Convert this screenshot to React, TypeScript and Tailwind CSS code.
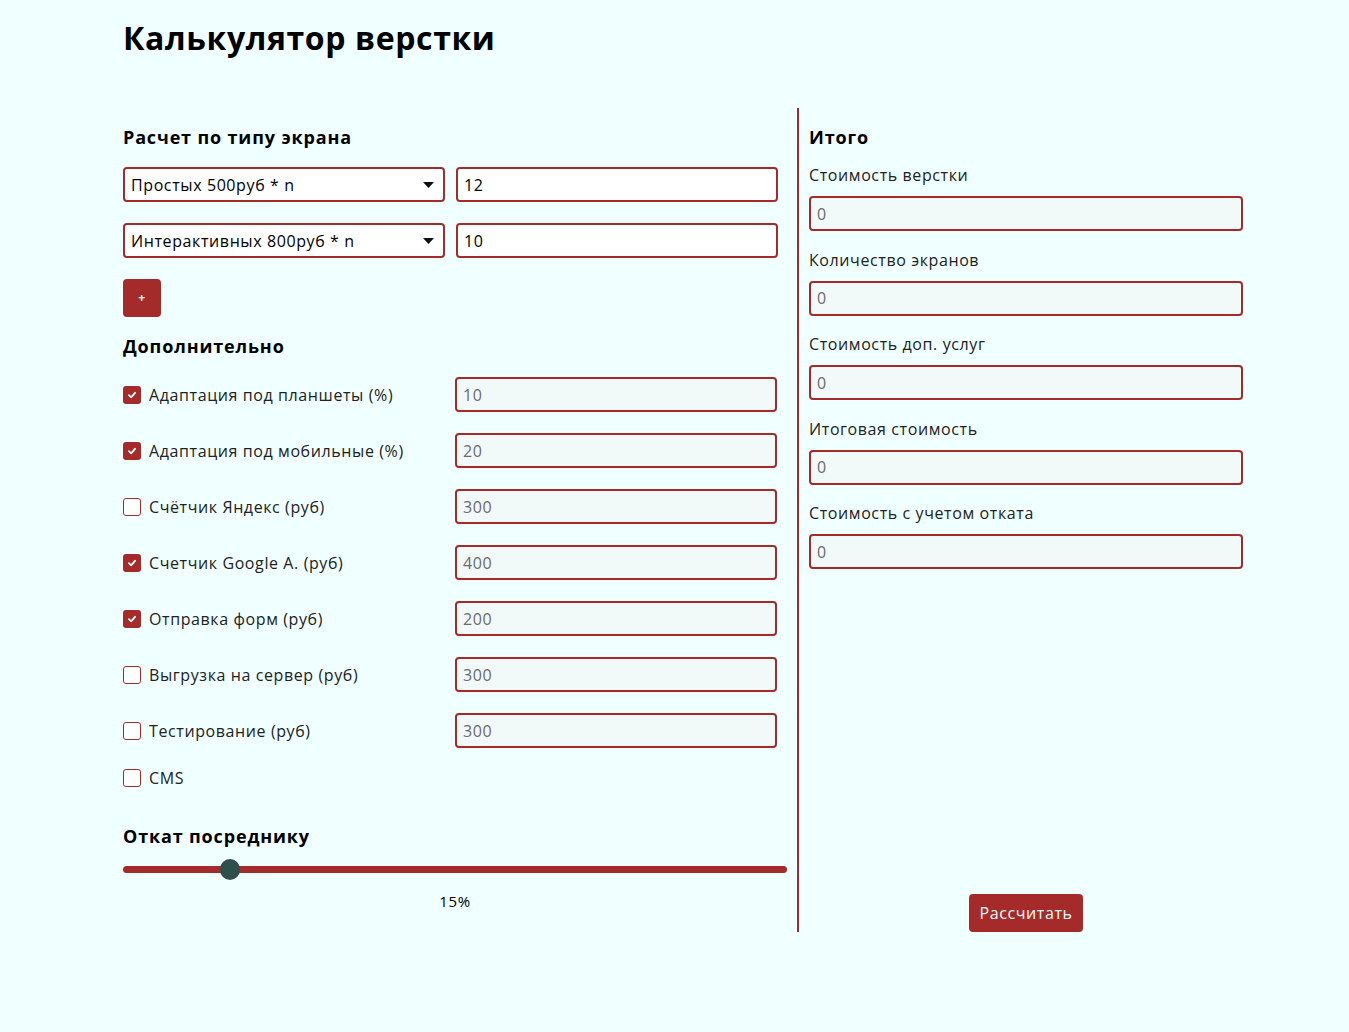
import React from 'react';

const font = { fontFamily: '"Open Sans", "Noto Sans", sans-serif' };

type Extra = { label: string; value?: string; checked: boolean };

const extras: Extra[] = [
    { label: 'Адаптация под планшеты (%)', value: '10', checked: true },
    { label: 'Адаптация под мобильные (%)', value: '20', checked: true },
    { label: 'Счётчик Яндекс (руб)', value: '300', checked: false },
    { label: 'Счетчик Google A. (руб)', value: '400', checked: true },
    { label: 'Отправка форм (руб)', value: '200', checked: true },
    { label: 'Выгрузка на сервер (руб)', value: '300', checked: false },
    { label: 'Тестирование (руб)', value: '300', checked: false },
    { label: 'CMS', checked: false },
];

const totals = [
    'Стоимость верстки',
    'Количество экранов',
    'Стоимость доп. услуг',
    'Итоговая стоимость',
    'Стоимость с учетом отката',
];

const Checkbox: React.FC<{ checked: boolean }> = ({ checked }) => (
    <span
        className={`w-[18px] h-[18px] rounded-[3px] flex items-center justify-center flex-shrink-0 ${checked ? 'bg-[#a52a2a]' : 'border border-[#a52a2a] bg-white'}`}
    >
        {checked && (
            <svg width="10" height="10" viewBox="0 0 10 10">
                <path d="M2 5.2 L4.2 7.3 L8 2.8" stroke="white" strokeWidth="1.8" fill="none" strokeLinecap="round" strokeLinejoin="round" />
            </svg>
        )}
    </span>
);

const Select: React.FC<{ text: string }> = ({ text }) => (
    <div className="w-[322px] h-[35px] border-2 border-[#a52a2a] rounded-[4px] bg-white flex items-center justify-between pl-[6px] pr-[9px] text-[16px] text-black">
        <span>{text}</span>
        <svg width="11" height="6" viewBox="0 0 11 6">
            <path d="M0 0 H11 L5.5 6 Z" fill="#111" />
        </svg>
    </div>
);

const Field: React.FC<{ value: string; disabled?: boolean; width?: string }> = ({ value, disabled, width = 'w-[322px]' }) => (
    <div
        className={`${width} h-[35px] border-2 border-[#a52a2a] rounded-[4px] flex items-center pl-[6px] text-[16px] ${disabled ? 'bg-[#f2f9f9] text-[#6b6b6b]' : 'bg-white text-black'}`}
    >
        {value}
    </div>
);

const App: React.FC = () => {
    return (
        <div className="min-h-[1032px] bg-[#f0ffff] text-black tracking-[0.6px]" style={font}>
            <div className="pl-[123px]">
                <h1 className="pt-[17px] text-[32px] font-bold leading-[42px] tracking-[0.6px]">Калькулятор верстки</h1>

                <div className="flex mt-[49px]">
                    {/* left column */}
                    <div className="w-[674px] pb-[21px]">
                        <h2 className="mt-[17px] text-[18px] font-bold leading-[24px] tracking-[0.85px]">Расчет по типу экрана</h2>

                        <div className="mt-[18px] flex flex-col gap-[21px]">
                            <div className="flex gap-[11px]">
                                <Select text="Простых 500руб * n" />
                                <Field value="12" />
                            </div>
                            <div className="flex gap-[11px]">
                                <Select text="Интерактивных 800руб * n" />
                                <Field value="10" />
                            </div>
                        </div>

                        <button className="mt-[21px] w-[38px] h-[38px] rounded-[4px] bg-[#a52a2a] text-white text-[12px] font-bold flex items-center justify-center">
                            +
                        </button>

                        <h2 className="mt-[17px] text-[18px] font-bold leading-[24px] tracking-[0.85px]">Дополнительно</h2>

                        <div className="mt-[19px] flex flex-col gap-[21px]">
                            {extras.map((e, i) => (
                                <div key={i} className={`flex items-center ${e.value ? 'h-[35px]' : 'h-[18px]'}`}>
                                    <div className="w-[332px] flex items-center gap-[8px] text-[16px] text-[#222]">
                                        <Checkbox checked={e.checked} />
                                        <span>{e.label}</span>
                                    </div>
                                    {e.value && <Field value={e.value} disabled />}
                                </div>
                            ))}
                        </div>

                        <h2 className="mt-[37px] text-[18px] font-bold leading-[24px] tracking-[0.85px]">Откат посреднику</h2>

                        <div className="relative mt-[11px] w-[664px] h-[20px] flex items-center">
                            <div className="w-full h-[7px] rounded-full bg-[#a52a2a]" />
                            <div className="absolute left-[97px] top-0 w-[20px] h-[21px] rounded-full bg-[#2f4f4f]" />
                        </div>
                        <div className="mt-[12px] w-[664px] text-center text-[15px] leading-[20px]">15%</div>
                    </div>

                    {/* right column */}
                    <div className="w-[456px] border-l-2 border-[#a52a2a] pl-[10px] flex flex-col">
                        <h2 className="mt-[17px] text-[18px] font-bold leading-[24px] tracking-[0.85px]">Итого</h2>
                        <div className="flex flex-col">
                            {totals.map((t, i) => (
                                <div key={i} className="flex flex-col">
                                    <label className={`${i === 0 ? 'mt-[15px]' : 'mt-[17.5px]'} text-[16px] leading-[22px] text-[#222]`}>{t}</label>
                                    <div className="mt-[10px]">
                                        <Field value="0" disabled width="w-[434px]" />
                                    </div>
                                </div>
                            ))}
                        </div>
                        <div className="mt-auto flex justify-center pr-[10px]">
                            <button className="h-[38px] px-[10px] rounded-[4px] bg-[#a52a2a] text-white text-[16px]">
                                Рассчитать
                            </button>
                        </div>
                    </div>
                </div>
            </div>
        </div>
    );
};

export default App;
